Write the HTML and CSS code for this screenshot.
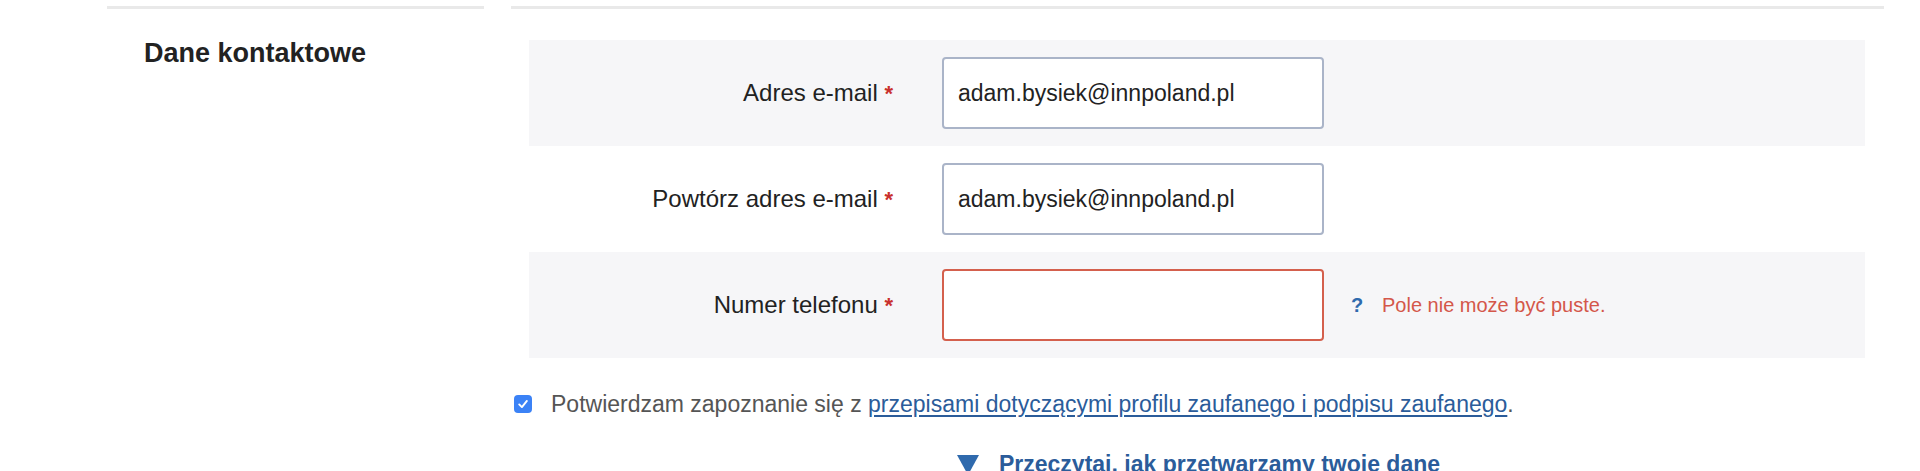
FILE: index.html
```html
<!DOCTYPE html>
<html lang="pl">
<head>
<meta charset="utf-8">
<title>Dane kontaktowe</title>
<link rel="stylesheet" href="styles.css">
</head>
<body>
<div class="section">
  <div class="side">
    <h2 class="side-title">Dane kontaktowe</h2>
  </div>
  <div class="main">
    <div class="rows">
      <div class="row row-shaded">
        <label class="label">Adres e-mail <span class="req">*</span></label>
        <div class="field">adam.bysiek@innpoland.pl</div>
      </div>
      <div class="row">
        <label class="label">Powtórz adres e-mail <span class="req">*</span></label>
        <div class="field">adam.bysiek@innpoland.pl</div>
      </div>
      <div class="row row-shaded">
        <label class="label">Numer telefonu <span class="req">*</span></label>
        <div class="field field-error"></div>
        <div class="hint">
          <span class="help">?</span>
          <span class="error">Pole nie może być puste.</span>
        </div>
      </div>
    </div>
    <div class="consent">
      <span class="checkbox"><svg width="12" height="12" viewBox="0 0 12 12"><path d="M2.2 6.4 L4.9 9.1 L9.9 2.9" fill="none" stroke="#fff" stroke-width="1.9" stroke-linecap="round" stroke-linejoin="round"/></svg></span>
      <span class="consent-text">Potwierdzam zapoznanie się z <a class="link" href="#">przepisami dotyczącymi profilu zaufanego i podpisu zaufanego</a>.</span>
    </div>
    <div class="more">
      <svg class="tri" width="22" height="20" viewBox="0 0 22 20"><path d="M0 0 H22 L11 20 Z" fill="#2f6aad"/></svg>
      <a class="more-link" href="#">Przeczytaj, jak przetwarzamy twoje dane</a>
    </div>
  </div>
</div>
</body>
</html>
```
FILE: styles.css
```css
html, body {
  margin: 0;
  padding: 0;
  background: #ffffff;
}
body {
  font-family: "Liberation Sans", Arial, Helvetica, sans-serif;
  color: #222222;
}
.section {
  display: flex;
  padding-top: 6px;
  padding-left: 107px;
  gap: 27px;
}
.side {
  width: 377px;
  flex: none;
  border-top: 3px solid #e9e9e9;
  padding-top: 28px;
  padding-left: 37px;
  box-sizing: border-box;
}
.side-title {
  margin: 0;
  font-size: 27px;
  line-height: 32px;
  font-weight: bold;
  color: #222222;
}
.main {
  width: 1373px;
  flex: none;
  border-top: 3px solid #e9e9e9;
  padding-top: 31px;
}
.rows {
  margin: 0 19px 0 18px;
}
.row {
  display: flex;
  align-items: center;
  height: 106px;
  box-sizing: border-box;
}
.row-shaded {
  background: #f6f6f8;
}
.label {
  width: 364px;
  flex: none;
  text-align: right;
  font-size: 24px;
  color: #222222;
  margin-right: 49px;
}
.req {
  color: #c9302c;
  font-weight: bold;
  font-size: 22px;
}
.field {
  width: 382px;
  height: 72px;
  flex: none;
  box-sizing: border-box;
  background: #ffffff;
  border: 2px solid #aab4c8;
  border-radius: 4px;
  padding: 0 14px;
  display: flex;
  align-items: center;
  font-size: 23px;
  color: #222222;
}
.field-error {
  border-color: #d4604d;
}
.hint {
  display: flex;
  align-items: center;
  margin-left: 27px;
}
.help {
  color: #2f6aad;
  font-weight: bold;
  font-size: 20px;
  width: 31px;
}
.error {
  color: #d4574a;
  font-size: 20px;
}
.consent {
  display: flex;
  align-items: center;
  margin-top: 33px;
  height: 26px;
}
.checkbox {
  width: 18px;
  height: 18px;
  margin-left: 3px;
  margin-right: 19px;
  flex: none;
  border-radius: 4px;
  background: #3b82f6;
  display: flex;
  align-items: center;
  justify-content: center;
}
.consent-text {
  font-size: 23px;
  line-height: 26px;
  color: #555555;
}
.link {
  color: #2b5c9a;
  text-decoration: underline;
  text-underline-offset: 3px;
}
.more {
  display: flex;
  align-items: flex-start;
  margin-top: 34px;
  padding-left: 446px;
}
.tri {
  margin-top: 4px;
  margin-right: 20px;
  flex: none;
}
.more-link {
  font-size: 23px;
  line-height: 26px;
  font-weight: bold;
  color: #2b5c9a;
  text-decoration: none;
}
```
